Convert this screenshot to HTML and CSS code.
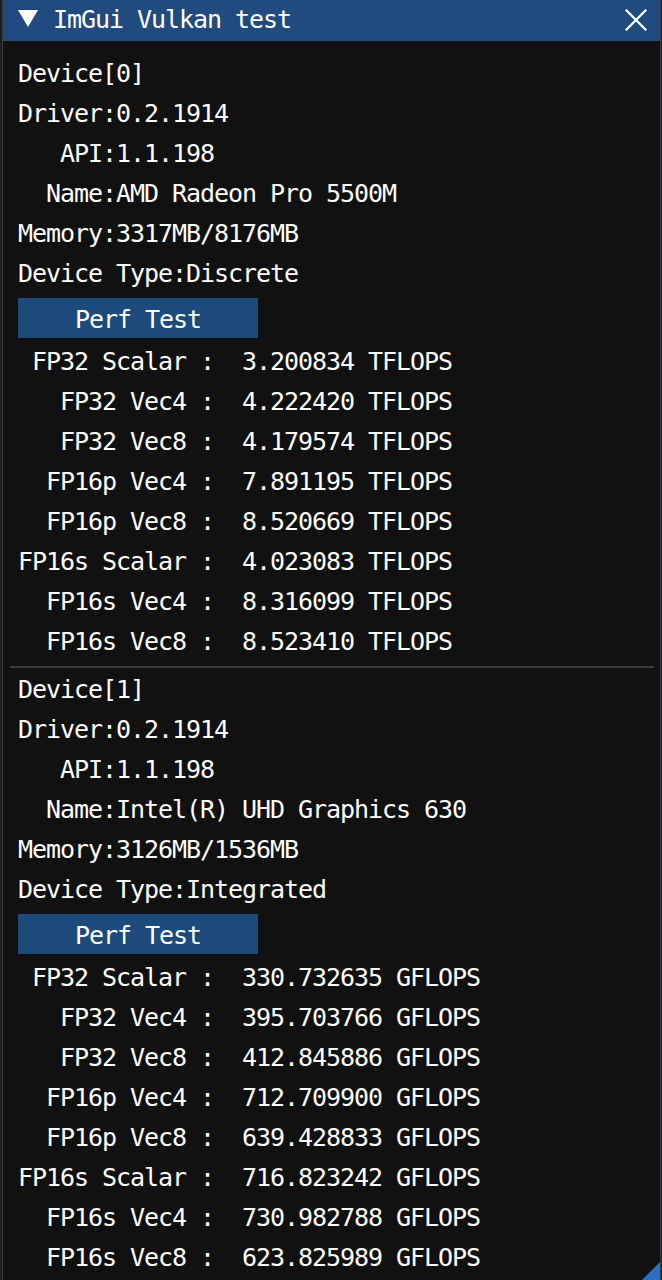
FILE: index.html
```html
<!DOCTYPE html>
<html>
<head>
<meta charset="utf-8">
<link rel="stylesheet" href="styles.css">
</head>
<body>
<div class="window">
  <div class="titlebar">
    <svg class="arrow" width="20" height="17" viewBox="0 0 20 17"><polygon points="0,0 20,0 10,17" fill="#fff"/></svg>
    <span class="title">ImGui Vulkan test</span>
    <svg class="close" width="22" height="22" viewBox="0 0 22 22"><path d="M1.5 1.5 L20.5 20.5 M20.5 1.5 L1.5 20.5" stroke="#fff" stroke-width="2.2" stroke-linecap="square"/></svg>
  </div>
  <div class="content">
    <div class="line">Device[0]</div>
    <div class="line">Driver:0.2.1914</div>
    <div class="line">   API:1.1.198</div>
    <div class="line">  Name:AMD Radeon Pro 5500M</div>
    <div class="line">Memory:3317MB/8176MB</div>
    <div class="line">Device Type:Discrete</div>
    <div class="btn">Perf Test</div>
    <div class="line"> FP32 Scalar :  3.200834 TFLOPS</div>
    <div class="line">   FP32 Vec4 :  4.222420 TFLOPS</div>
    <div class="line">   FP32 Vec8 :  4.179574 TFLOPS</div>
    <div class="line">  FP16p Vec4 :  7.891195 TFLOPS</div>
    <div class="line">  FP16p Vec8 :  8.520669 TFLOPS</div>
    <div class="line">FP16s Scalar :  4.023083 TFLOPS</div>
    <div class="line">  FP16s Vec4 :  8.316099 TFLOPS</div>
    <div class="line">  FP16s Vec8 :  8.523410 TFLOPS</div>
    <div class="sep"></div>
    <div class="line">Device[1]</div>
    <div class="line">Driver:0.2.1914</div>
    <div class="line">   API:1.1.198</div>
    <div class="line">  Name:Intel(R) UHD Graphics 630</div>
    <div class="line">Memory:3126MB/1536MB</div>
    <div class="line">Device Type:Integrated</div>
    <div class="btn">Perf Test</div>
    <div class="line"> FP32 Scalar :  330.732635 GFLOPS</div>
    <div class="line">   FP32 Vec4 :  395.703766 GFLOPS</div>
    <div class="line">   FP32 Vec8 :  412.845886 GFLOPS</div>
    <div class="line">  FP16p Vec4 :  712.709900 GFLOPS</div>
    <div class="line">  FP16p Vec8 :  639.428833 GFLOPS</div>
    <div class="line">FP16s Scalar :  716.823242 GFLOPS</div>
    <div class="line">  FP16s Vec4 :  730.982788 GFLOPS</div>
    <div class="line">  FP16s Vec8 :  623.825989 GFLOPS</div>
  </div>
  <div class="grip"></div>
</div>
</body>
</html>
```
FILE: styles.css
```css
html, body {
  margin: 0;
  padding: 0;
  height: 100%;
  background: #1b1e25;
  overflow: hidden;
}
.window {
  position: relative;
  margin-left: 2px;
  width: 657px;
  height: 1300px;
  background: #111111;
  border-left: 1px solid #3b3b40;
  border-right: 1px solid #3b3b40;
  font-family: "DejaVu Sans Mono", "Liberation Mono", monospace;
  font-size: 25px;
  letter-spacing: -1.05px;
  color: #ffffff;
}
.titlebar {
  height: 41px;
  background: #214a7e;
  display: flex;
  align-items: center;
  padding-left: 15px;
  padding-right: 13px;
}
.arrow {
  margin-top: -4px;
}
.title {
  margin-left: 15px;
  white-space: pre;
  flex: 1;
  margin-top: -3px;
}
.close {
  margin-top: -2px;
}
.content {
  display: flex;
  flex-direction: column;
  align-items: flex-start;
  gap: 8px;
  padding: 17px 0 0 15px;
}
.line {
  height: 32px;
  line-height: 32px;
  white-space: pre;
}
.btn {
  width: 240px;
  height: 40px;
  line-height: 44px;
  background: #1c4a7b;
  text-align: center;
  white-space: pre;
  overflow: hidden;
}
.sep {
  align-self: stretch;
  height: 2px;
  margin: 0 6px -2px -8px;
  background: #3a3a40;
}
.grip {
  position: absolute;
  right: 0;
  top: 1262px;
  width: 0;
  height: 0;
  border-left: 18px solid transparent;
  border-bottom: 18px solid #2a6fc4;
}
```
